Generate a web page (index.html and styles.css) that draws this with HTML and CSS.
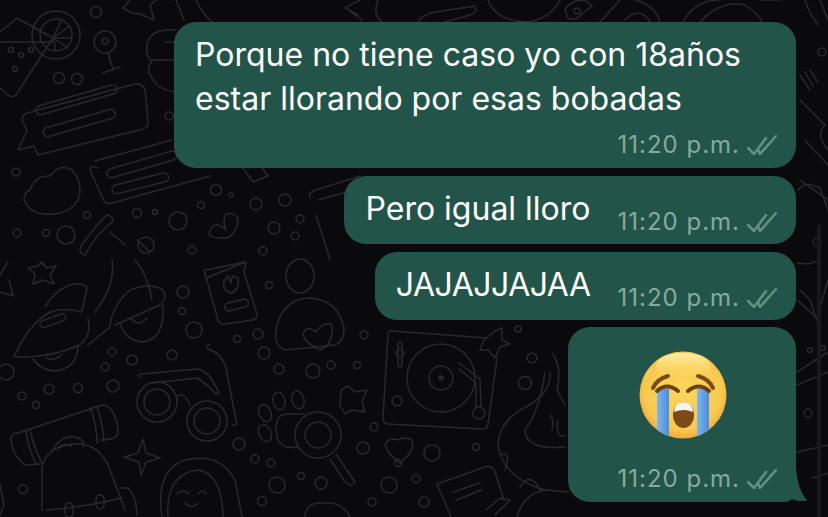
FILE: index.html
```html
<!DOCTYPE html>
<html lang="es">
<head>
    <meta charset="UTF-8" />
    <meta name="viewport" content="width=device-width, initial-scale=1.0" />
    <title>Chat</title>
    <link rel="stylesheet" href="styles.css">
</head>
<body>
    <svg class="doodles" width="828" height="517" viewBox="0 0 828 517" fill="none">
        <!-- cocktail -->
        <path d="M0 32L17 18L53 38L16 95Q12 98 8 95L0 88M0 42L53 42"/>
        <circle cx="56" cy="35" r="24"/><circle cx="56" cy="35" r="16"/>
        <path d="M53 38L62 19M53 38L70 26M53 38L71 38M53 38L68 48M53 38L56 51"/>
        <circle cx="11" cy="50" r="2.5"/><circle cx="21" cy="55" r="2.5"/><circle cx="31" cy="50" r="2.5"/><circle cx="15" cy="69" r="2.5"/>
        <circle cx="59" cy="78" r="5.5"/><circle cx="77" cy="79" r="5.5"/><circle cx="96" cy="12" r="5.5"/>
        <circle cx="105" cy="42" r="11"/><circle cx="105" cy="41" r="3"/>
        <path d="M108 53L113 69M103 73L120 67"/>
        <path d="M123 8L130 0M140 14L154 20L150 5L156 0M123 8L132 13L140 14"/>
        <!-- fist -->
        <path d="M176 30Q150 28 147 45Q145 55 152 62Q145 68 152 78Q158 90 176 92"/>
        <path d="M165 42L176 42M152 60L176 60"/>
        <path d="M176 0L184 20M196 0Q205 20 222 28L250 27"/>
        <!-- chat bubbles -->
        <path d="M27 113L135 84Q143 83 145 90L148 122Q149 127 143 129L38 155L34 146L18 150L27 131L22 120Q22 115 27 113Z"/>
        <rect x="35" y="107" width="84" height="9" rx="4.5" transform="rotate(-16 35 107)"/>
        <rect x="42" y="129" width="75" height="9" rx="4.5" transform="rotate(-16 42 129)"/>
        <path d="M95 161L172 140M97 168Q88 163 91 172L103 199Q105 205 112 203L210 176"/>
        <rect x="106" y="170" width="72" height="9" rx="4.5" transform="rotate(-16 106 170)"/>
        <rect x="111" y="186" width="58" height="9" rx="4.5" transform="rotate(-14 111 186)"/>
        <path d="M30 190Q35 175 50 176Q60 163 72 170Q80 178 80 192Q78 210 55 214Q30 216 24 200Q24 192 30 190Z"/>
        <circle cx="16" cy="172" r="4"/><circle cx="169" cy="116" r="4"/><circle cx="216" cy="190" r="5.5"/><circle cx="231" cy="195" r="2"/>
        <circle cx="201" cy="205" r="3.5"/><circle cx="256" cy="204" r="6"/><circle cx="285" cy="200" r="6"/><circle cx="137" cy="213" r="4.5"/><circle cx="155" cy="212" r="2.5"/>
        <circle cx="178" cy="221" r="9"/><circle cx="87" cy="215" r="3.5"/><circle cx="17" cy="233" r="4"/><circle cx="46" cy="233" r="3.5"/><circle cx="66" cy="235" r="9"/>
        <circle cx="274" cy="228" r="6"/><circle cx="300" cy="219" r="4"/><circle cx="295" cy="236" r="4"/><circle cx="146" cy="245" r="8"/><circle cx="192" cy="250" r="4"/><circle cx="263" cy="251" r="4"/>
        <path d="M226 230Q215 220 210 230Q206 238 222 238Q233 240 238 222Q238 212 226 214Q222 222 226 230Z"/>
        <path d="M243 168L253 182L268 176L262 168"/>
        <!-- phone card -->
        <path d="M310 198Q308 192 316 190L360 176M318 200L350 191M330 260L316 215"/>
        <path d="M85 255Q95 235 112 222Q115 217 107 215Q95 226 81 246Q78 254 85 255Z"/>
        <path d="M125 245L110 232M137 240L150 252"/>
        <!-- scooter -->
        <path d="M112 260Q116 285 95 312M135 260Q148 275 152 300"/>
        <path d="M15 355Q28 325 50 312Q65 307 82 312L87 288Q85 282 70 285Q55 290 45 307"/>
        <path d="M15 355Q12 357 18 357Q50 358 80 345Q92 335 88 318"/>
        <rect x="39" y="322" width="27" height="7" rx="3.5" transform="rotate(-20 39 322)"/>
        <path d="M33 359Q40 370 55 371Q78 368 78 345M46 358Q55 362 62 354"/>
        <path d="M88 345L110 327Q112 305 130 290Q150 282 163 290Q168 298 160 305L115 325"/>
        <path d="M120 323Q125 340 142 342Q165 340 163 305M131 318Q138 328 147 318"/>
        <path d="M0 275L8 262M0 292L13 296L9 280"/>
        <path d="M42 262L46 268L56 266L50 275L54 284L43 280L33 284L35 274L28 268L38 266Z"/>
        <circle cx="6" cy="372" r="8"/><circle cx="22" cy="396" r="4"/><circle cx="36" cy="405" r="3.5"/><circle cx="49" cy="389" r="5"/><circle cx="78" cy="388" r="4.5"/><circle cx="113" cy="386" r="6"/>
        <circle cx="112" cy="352" r="4"/><circle cx="132" cy="360" r="5"/><circle cx="105" cy="367" r="4"/>
        <circle cx="183" cy="292" r="6"/><circle cx="182" cy="311" r="3.5"/><circle cx="194" cy="330" r="8"/><circle cx="172" cy="355" r="5"/><circle cx="237" cy="339" r="3.5"/><circle cx="258" cy="334" r="5"/><circle cx="264" cy="353" r="6"/><circle cx="269" cy="285" r="3.5"/>
        <circle cx="279" cy="369" r="5"/><circle cx="313" cy="371" r="7"/><circle cx="331" cy="365" r="4"/>
        <!-- card with button -->
        <path d="M204 270L206 278L246 262L244 272L257 314Q258 318 253 320L225 324Q220 325 218 320L204 270M206 270L246 262"/>
        <path d="M224 281Q222 291 231 293Q240 290 238 278L232 276L231 283L228 276Z"/>
        <rect x="224" y="304" width="24" height="8" rx="4" transform="rotate(-14 224 304)"/>
        <ellipse cx="300" cy="276" rx="14" ry="17"/>
        <path d="M285 350Q272 345 277 325Q285 298 310 298Q338 300 344 328Q344 342 335 345L285 350Z"/>
        <path d="M320 350Q300 340 304 332Q308 325 316 332Q322 322 331 324Q335 332 328 345Z"/>
        <!-- glasses -->
        <path d="M140 377Q135 375 142 374L196 369Q205 369 212 380L219 392Q220 395 215 393Q208 385 197 378L152 383"/>
        <path d="M210 345Q205 345 208 349Q222 353 226 368L236 420Q238 425 233 425"/>
        <circle cx="157" cy="402" r="20"/><circle cx="157" cy="402" r="13"/>
        <circle cx="207" cy="421" r="20"/><circle cx="207" cy="421" r="13"/>
        <path d="M177 396Q185 392 190 405"/>
        <circle cx="239" cy="444" r="6"/>
        <!-- paw and magnifier -->
        <ellipse cx="279" cy="401" rx="6" ry="9" transform="rotate(-10 279 401)"/><ellipse cx="298" cy="400" rx="6" ry="9" transform="rotate(-15 298 400)"/>
        <ellipse cx="265" cy="413" rx="6" ry="9" transform="rotate(-25 265 413)"/><ellipse cx="265" cy="433" rx="6" ry="9" transform="rotate(-25 265 433)"/>
        <path d="M304 414L285 414Q276 416 276 428L277 438Q282 450 298 447"/>
        <circle cx="318" cy="435" r="23"/><circle cx="318" cy="435" r="13"/>
        <path d="M336 454L355 482Q352 488 345 482L330 459"/>
        <circle cx="255" cy="459" r="4"/><circle cx="271" cy="463" r="4"/><circle cx="277" cy="485" r="8"/><circle cx="301" cy="476" r="3.5"/><circle cx="321" cy="483" r="6"/><circle cx="262" cy="501" r="4.5"/>
        <!-- tube and bag -->
        <path d="M18 433L102 405Q112 405 117 422L118 433Q116 440 100 440M40 464L25 465Q12 455 11 440Q10 433 18 433"/>
        <path d="M26 431Q28 448 36 464M30 430Q34 448 42 463M90 408Q97 425 97 443M97 407Q103 425 104 441"/>
        <path d="M52 452Q60 435 75 437Q86 440 83 447M58 448Q64 443 72 446"/>
        <path d="M42 468Q45 448 72 444Q100 442 110 470L125 510M42 468L42 510M46 510Q80 508 122 498"/>
        <rect x="65" y="503" width="8" height="14" rx="4"/><rect x="96" y="495" width="8" height="14" rx="4"/>
        <path d="M120 488L128 488Q136 495 137 515"/>
        <circle cx="23" cy="489" r="4.5"/>
        <path d="M0 485L4 505L0 515"/>
        <path d="M143 439L146 453L160 458L146 462L141 475L139 462L124 457L138 453Z"/>
        <path d="M162 517Q155 470 185 460Q220 452 235 480L242 517"/>
        <path d="M168 517Q165 475 197 470Q222 472 223 517"/>
        <path d="M177 494Q184 488 189 494M198 494Q204 488 206 494M185 503Q192 510 198 503"/>
        <path d="M305 517Q305 505 318 503L330 503Q345 505 350 517"/>
        <!-- turntable -->
        <path d="M392 331L487 338M392 331Q388 330 388 335L383 418Q383 423 388 424L482 429Q488 429 488 424L497 358"/>
        <circle cx="441" cy="378" r="34"/><circle cx="441" cy="378" r="12"/><circle cx="441" cy="378" r="2" fill="#29292b"/>
        <rect x="398" y="342" width="4" height="25" rx="2"/><circle cx="400" cy="353" r="4"/><circle cx="397" cy="401" r="5"/>
        <path d="M459 363L480 379L481 408M459 369L476 383L476 407"/>
        <circle cx="479" cy="413" r="6"/>
        <path d="M495 331L502 328L502 340L510 344L500 347L495 358L488 350L480 350L484 340Z"/>
        <circle cx="364" cy="335" r="4"/><circle cx="357" cy="365" r="3.5"/><circle cx="518" cy="329" r="3"/><circle cx="532" cy="358" r="5"/><circle cx="525" cy="383" r="6.5"/>
        <path d="M341 390L348 386L355 392L367 390L362 402L365 412L352 410L345 414L340 405Z"/>
        <circle cx="374" cy="427" r="4"/><circle cx="363" cy="448" r="6"/><circle cx="432" cy="453" r="8"/><circle cx="476" cy="447" r="3.5"/><circle cx="398" cy="463" r="3.5"/>
        <circle cx="389" cy="485" r="8"/><circle cx="416" cy="479" r="4"/><circle cx="372" cy="502" r="4"/><circle cx="424" cy="502" r="5"/>
        <path d="M385 445Q388 437 398 440Q405 436 412 440Q416 450 400 463Q388 455 385 445Z"/>
        <path d="M451 517L437 484L485 467Q492 465 495 472L504 500M453 492L480 483M456 500L482 490"/>
        <path d="M486 510L500 498L510 500L505 505L495 515"/>
        <!-- guitar -->
        <path d="M553 354Q562 368 557 390L565 405M550 372Q552 395 520 410Q498 425 498 445Q503 478 545 490L568 492"/>
        <path d="M545 372Q540 410 525 430Q525 450 565 447M550 415Q555 420 552 430M565 435Q555 440 558 420"/>
        <path d="M504 425L510 418M500 455Q512 450 505 470M520 488Q530 470 540 490"/>
        <path d="M517 517Q525 490 550 490"/>
        <!-- top strip -->
        <path d="M345 8L360 0M345 8L358 15M345 8L362 20"/>
        <path d="M378 0Q372 15 382 22M418 22Q422 15 435 12L475 6Q478 12 470 15L445 22"/>
        <path d="M488 0Q495 20 525 22Q550 20 560 0"/>
        <path d="M565 10Q570 0 585 0L592 6L582 14Q575 22 568 18Z"/>
        <circle cx="577" cy="11" r="3"/>
        <path d="M600 22L620 0M635 0Q655 5 660 22M625 20Q640 5 650 22M683 22Q695 0 720 0M700 22Q720 0 745 5Q760 15 762 22M760 0L780 0"/>
        <path d="M805 0Q810 15 818 25M820 0L828 20"/>
        <!-- right edge -->
        <circle cx="822" cy="52" r="4"/>
        <path d="M800 75L810 90M805 72L813 86M810 70L818 82"/>
        <path d="M800 100L825 125Q815 135 828 150M805 140L828 165"/>
        <path d="M800 180L828 200M798 190Q805 180 820 188L828 210"/>
        <circle cx="817" cy="242" r="4"/>
        <path d="M797 263L808 264L820 260M800 290L810 300L820 330M797 300L817 318L828 280"/>
        <circle cx="810" cy="350" r="2.5"/><circle cx="823" cy="348" r="2.5"/>
        <path d="M797 372L828 352M797 385L828 372"/>
        <circle cx="808" cy="413" r="4"/>
        <path d="M797 452L828 445M812 478L828 473"/>
        <path class="edge" d="M819 225L819 517"/>
    </svg>

    <main class="chat">
        <div class="bubble bubble-long">
            <p class="text">Porque no tiene caso yo con 18años<br>estar llorando por esas bobadas</p>
            <div class="meta">
                <span class="time">11:20 p.m.</span>
                <svg class="ticks" width="30" height="20" viewBox="0 0 30 20" fill="none">
                    <path d="M1 13L7 19L19 3M11 14L13 19L29 1"/>
                </svg>
            </div>
        </div>

        <div class="bubble bubble-short">
            <p class="text">Pero igual lloro</p>
            <div class="meta">
                <span class="time">11:20 p.m.</span>
                <svg class="ticks" width="30" height="20" viewBox="0 0 30 20" fill="none">
                    <path d="M1 13L7 19L19 3M11 14L13 19L29 1"/>
                </svg>
            </div>
        </div>

        <div class="bubble bubble-short">
            <p class="text text-caps">JAJAJJAJAA</p>
            <div class="meta">
                <span class="time">11:20 p.m.</span>
                <svg class="ticks" width="30" height="20" viewBox="0 0 30 20" fill="none">
                    <path d="M1 13L7 19L19 3M11 14L13 19L29 1"/>
                </svg>
            </div>
        </div>

        <div class="bubble bubble-emoji">
            <svg class="emoji" width="88" height="88" viewBox="0 0 88 88">
                <defs>
                    <radialGradient id="face" cx="50%" cy="45%" r="56%">
                        <stop offset="0" stop-color="#fbd65c"/>
                        <stop offset="0.8" stop-color="#f9c94f"/>
                        <stop offset="1" stop-color="#eda53b"/>
                    </radialGradient>
                    <linearGradient id="shine" x1="0" y1="0" x2="0" y2="1">
                        <stop offset="0" stop-color="#fff0b0"/>
                        <stop offset="1" stop-color="#fbd65c" stop-opacity="0"/>
                    </linearGradient>
                    <linearGradient id="tear" x1="0" y1="0" x2="1" y2="0">
                        <stop offset="0" stop-color="#7db7ee"/>
                        <stop offset="1" stop-color="#4a8ddd"/>
                    </linearGradient>
                    <clipPath id="round"><circle cx="44" cy="44" r="43.5"/></clipPath>
                </defs>
                <circle cx="44" cy="44" r="43.5" fill="url(#face)"/>
                <ellipse cx="44" cy="15" rx="27" ry="13" fill="url(#shine)"/>
                <path d="M14 37Q18 28 29 25" class="brow"/>
                <path d="M74 37Q70 28 59 25" class="brow"/>
                <g clip-path="url(#round)">
                    <path d="M18 38L30 38L30 88L18 88Z" fill="url(#tear)"/>
                    <path d="M58 38L70 38L70 88L58 88Z" fill="url(#tear)"/>
                </g>
                <path d="M18 40Q28 31 39 40" class="lid"/>
                <path d="M49 40Q60 31 70 40" class="lid"/>
                <ellipse cx="44.5" cy="64" rx="10.5" ry="13" fill="#7d4a17"/>
                <path d="M35 61Q36 51 44.5 51Q53 51 54 61Q44.5 57 35 61Z" fill="#f6f4ee"/>
            </svg>
            <div class="meta">
                <span class="time">11:20 p.m.</span>
                <svg class="ticks" width="30" height="20" viewBox="0 0 30 20" fill="none">
                    <path d="M1 13L7 19L19 3M11 14L13 19L29 1"/>
                </svg>
            </div>
            <svg class="tail" width="24" height="34" viewBox="0 0 24 34">
                <path d="M6 0L12 0Q13 20 23 33L14 33Q6 30 0 30Z"/>
            </svg>
        </div>
    </main>
</body>
</html>
```

FILE: styles.css
```css
body {
    margin: 0;
    padding: 0;
    width: 828px;
    height: 517px;
    overflow: hidden;
    position: relative;
    background-color: #0a0a0c;
    font-family: "Inter", "Liberation Sans", sans-serif;
}

.doodles {
    position: absolute;
    top: 0;
    left: 0;
}

.doodles path,
.doodles circle,
.doodles rect,
.doodles ellipse {
    stroke: #29292b;
    stroke-width: 1.5;
    stroke-linecap: round;
    stroke-linejoin: round;
}

.doodles .edge {
    stroke: #19191b;
    stroke-width: 4;
    stroke-linecap: butt;
}

.chat {
    position: relative;
    display: flex;
    flex-direction: column;
    align-items: flex-end;
    gap: 8px;
    padding: 22px 32px 0 0;
}

.bubble {
    box-sizing: border-box;
    position: relative;
    background-color: #23544a;
    border-radius: 22px;
    color: #fff;
}

.bubble-long {
    width: 622px;
    height: 146px;
    padding: 11px 19px 0 21px;
}

.bubble-short {
    display: flex;
    align-items: flex-start;
    justify-content: space-between;
    height: 68px;
    padding: 11px 19px 0 21px;
}

.bubble-emoji {
    display: flex;
    flex-direction: column;
    align-items: center;
    width: 228px;
    height: 175px;
    margin-top: -1px;
    padding: 24px 19px 0 21px;
    border-bottom-right-radius: 12px;
}

.text {
    margin: 0;
    font-size: 32px;
    line-height: 44px;
    white-space: nowrap;
}

.text-caps {
    letter-spacing: -0.5px;
}

.meta {
    display: flex;
    align-items: center;
    justify-content: flex-end;
    gap: 7px;
    color: #83ab9f;
    font-size: 24px;
    line-height: 30px;
    letter-spacing: 1px;
}

.bubble-long .meta {
    margin-top: 9px;
}

.bubble-short .meta {
    margin: 20px 0 0 27px;
}

.bubble-emoji .meta {
    align-self: flex-end;
    margin-top: 25px;
}

.ticks path {
    stroke: #62917f;
    stroke-width: 2.5;
    stroke-linecap: round;
    stroke-linejoin: round;
}

.brow,
.lid {
    fill: none;
    stroke-width: 4;
    stroke-linecap: round;
}

.brow {
    stroke: #7d4a17;
}

.lid {
    stroke: #6b4216;
}

.tail {
    position: absolute;
    right: -12px;
    bottom: 0;
    fill: #23544a;
}
```
